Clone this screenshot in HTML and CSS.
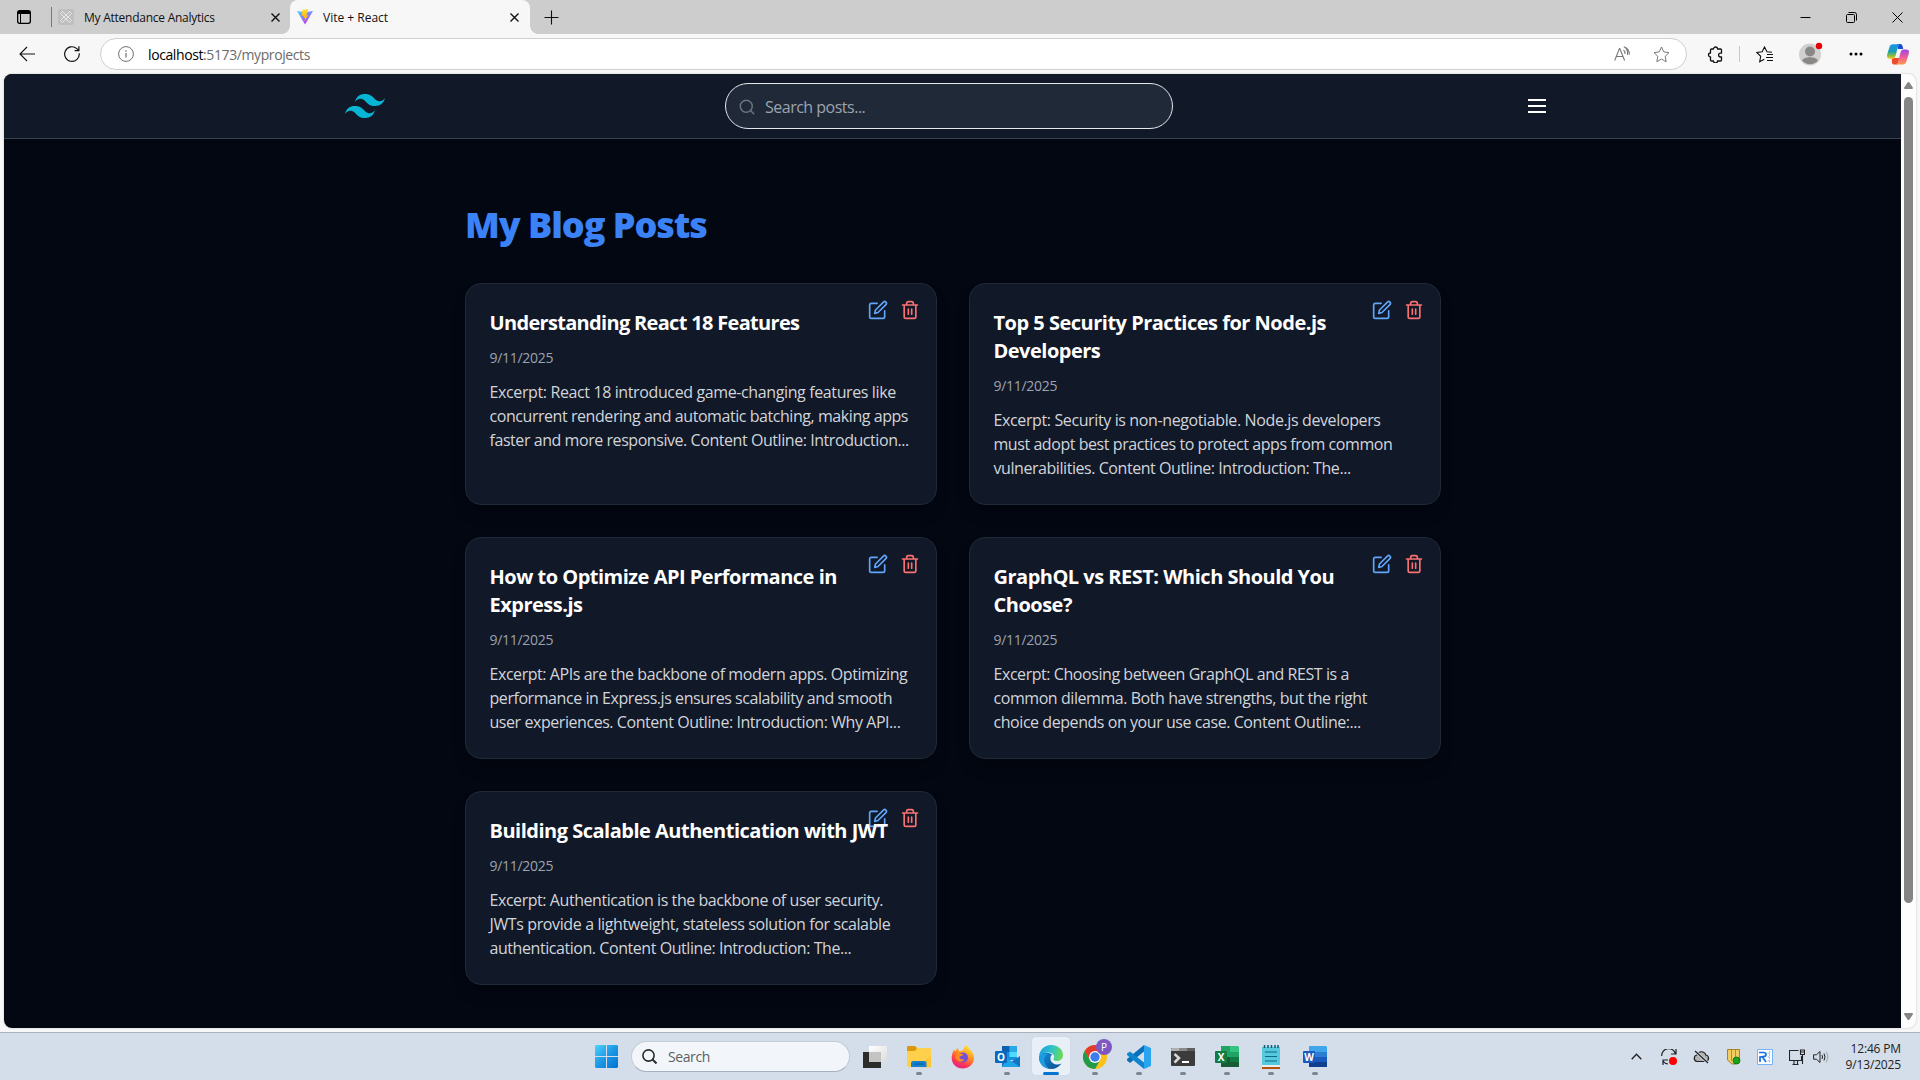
FILE: index.html
```html
<!DOCTYPE html>
<html lang="en">
<head>
<meta charset="utf-8">
<title>Vite + React</title>
<link rel="stylesheet" href="styles.css">
</head>
<body>
<div class="screen">
  <div class="tabstrip">
    <svg class="workspaces" width="14" height="14" viewBox="0 0 14 14"><rect x=".65" y=".65" width="12.700" height="12.700" rx="2" fill="none" stroke="#000" stroke-width="1.300"/><path d="M1 1h12v3H1z"/><path d="M3.500 4v9" stroke="#000"/></svg>
    <span class="tab-divider"></span>
    <div class="tab tab-idle">
      <svg width="16" height="16" viewBox="0 0 16 16"><rect width="16" height="16" rx="2" fill="#bebfc1"/><path d="M2.500 4.500l2-2 9 9-2 2zM11.500 2.500l2 2-9 9-2-2z" fill="none" stroke="#e8e8e8"/></svg>
      <span class="tab-title">My Attendance Analytics</span>
      <svg class="close" width="9" height="9" viewBox="0 0 9 9"><path d="M.5.5l8 8M8.500.5l-8 8" stroke="#111" stroke-width="1.400"/></svg>
    </div>
    <div class="tab tab-active">
      <svg width="16" height="16" viewBox="0 0 15 16" preserveAspectRatio="none"><defs><linearGradient id="vt" x1="0" y1="0" x2=".6" y2="1"><stop offset="0" stop-color="#41d1ff"/><stop offset="1" stop-color="#bd34fe"/></linearGradient><linearGradient id="vy" x1="0" y1="0" x2="0" y2="1"><stop offset="0" stop-color="#ffdd35"/><stop offset="1" stop-color="#ffa800"/></linearGradient></defs><path d="M0 2l7.500 1.300L15 2 7.500 15.500z" fill="url(#vt)"/><path d="M10.500 0L5 1l-.4 6 2-.3-.6 2.500 1.600-.5-.8 3.800 4-6.500-2 .4z" fill="url(#vy)"/></svg>
      <span class="tab-title tab-title-active">Vite + React</span>
      <svg class="close" width="9" height="9" viewBox="0 0 9 9"><path d="M.5.5l8 8M8.500.5l-8 8" stroke="#111" stroke-width="1.400"/></svg>
    </div>
    <svg class="newtab" width="15" height="15" viewBox="0 0 15 15"><path d="M7.500.5v14M.5 7.500h14" stroke="#111" stroke-width="1.100"/></svg>
    <div class="window-controls">
      <svg width="11" height="11" viewBox="0 0 11 11"><path d="M.5 5.500h10" stroke="#000"/></svg>
      <svg width="11" height="11" viewBox="0 0 11 11" fill="none" stroke="#000"><rect x=".5" y="2.500" width="8" height="8" rx="1"/><path d="M2.500.5h6a2 2 0 0 1 2 2v6"/></svg>
      <svg width="11" height="11" viewBox="0 0 11 11"><path d="M.5.5l10 10M10.500.5l-10 10" stroke="#000"/></svg>
    </div>
  </div>

  <div class="toolbar">
    <svg class="back" width="16" height="16" viewBox="0 0 16 16" fill="none" stroke="#111" stroke-width="1.100"><path d="M1 8h15M8 1L1 8l7 7"/></svg>
    <svg class="reload" width="16" height="16" viewBox="0 0 16 16" fill="none" stroke="#111" stroke-width="1.200"><path d="M15.200 7.200A7.300 7.300 0 1 1 12.800 2.600L14.700 4.400M14.900.2v4.400h-4.300"/></svg>
    <div class="address">
      <svg width="16" height="16" viewBox="0 0 16 16" fill="none" stroke="#6f6f6f"><circle cx="8" cy="8" r="7.400"/><path d="M8 7v4.500M8 4.300v1.500" stroke-width="1.200"/></svg>
      <span class="url"><b>localhost</b>:5173/myprojects</span>
      <svg class="read" width="17" height="16" viewBox="0 0 17 16" fill="none" stroke="#777" stroke-width="1.100"><path d="M.7 14.500L5.500 2.500h.3l4.800 12M2.300 10.500H9M9.500 3.800a4 4 0 0 1 1.300 4M11.500 2.200a6.500 6.500 0 0 1 1.800 6.600M9.800.7a8 8 0 0 1 5.500 8"/></svg>
      <svg width="17" height="17" viewBox="0 0 17 17" fill="none" stroke="#777"><path stroke-linejoin="round" d="M8.500 1l2.300 4.900 5.200.7-3.800 3.700 1 5.400-4.700-2.600-4.700 2.600 1-5.400L1 6.600l5.200-.7z"/></svg>
    </div>
    <svg class="ext" width="16" height="17" viewBox="0 0 16 17" fill="none" stroke="#111" stroke-width="1.300"><path stroke-linejoin="round" d="M4.500 3h2a2 2 0 0 1 4 0h3q1 0 1 1v3.200h-1a1.900 1.900 0 0 0 0 3.800h1v3q0 1-1 1h-3a2 2 0 0 1-4 0h-2q-1 0-1-1v-3a2 2 0 0 1 0-4V4q0-1 1-1z"/></svg>
    <span class="tool-divider"></span>
    <svg class="favs" width="17" height="17" viewBox="0 0 17 17" fill="none" stroke="#111" stroke-width="1.100"><path d="M16 6.200l-5-.5L8.500 1 6.200 5.700l-5.500.8 4 3.800-1 5.400 4.600-2.500M11 8.500h6M10 11.500h7M11 14.500h6"/></svg>
    <svg class="profile" width="24" height="24" viewBox="0 0 24 24"><circle cx="11" cy="12.500" r="11" fill="#d2d0ce"/><circle cx="11" cy="9.500" r="5" fill="#8a8886"/><path d="M3.300 19c0-5 15.400-5 15.400 0a11 11 0 0 1-15.400 0z" fill="#8a8886"/><circle cx="20" cy="4" r="3.200" fill="#e60000"/></svg>
    <svg class="more" width="14" height="4" viewBox="0 0 14 4"><circle cx="2" cy="2" r="1.500"/><circle cx="7" cy="2" r="1.500"/><circle cx="12" cy="2" r="1.500"/></svg>
    <svg class="copilot" width="22" height="21" viewBox="0 0 22 21"><defs><linearGradient id="ca" x1="0" y1="0" x2="0" y2="1"><stop offset="0" stop-color="#1997e8"/><stop offset=".5" stop-color="#1a9fb5"/><stop offset=".8" stop-color="#8cbf3c"/><stop offset="1" stop-color="#f5c51c"/></linearGradient><linearGradient id="cb" x1="0" y1="0" x2="0" y2="1"><stop offset="0" stop-color="#a146e0"/><stop offset=".5" stop-color="#ec5a9c"/><stop offset="1" stop-color="#ff9a4b"/></linearGradient></defs><path d="M10 0h3c2 0 2.500 1 3.200 5H11z" fill="#1b4fd0"/><path d="M5.500 20.500h5l2-6.500H5c-.5 3 0 6.500 1.500 6.500z" fill="#ef4a2e"/><path d="M6 .2h7c-2 1-2.500 4-3.500 8s-1.500 6.500-4 6.500H3C0 14.700-.3 13 .3 10L2.500 3C3 1 4 .2 6 .2z" fill="url(#ca)"/><path d="M16 20.500H9c2-1 2.500-4 3.500-8s1.500-7 4-7H19c3 0 3.300 1.500 2.700 4.500l-2.200 7c-.5 2-1.500 3.500-3.500 3.500z" fill="url(#cb)"/></svg>
  </div>

  <div class="viewport">
    <div class="page">
      <header class="nav">
        <svg class="logo" width="40" height="24" viewBox="0 4.800 24 14.400"><path fill="#06b6d4" d="M12.001 4.800c-3.200 0-5.200 1.600-6 4.800 1.200-1.600 2.600-2.200 4.200-1.800.913.228 1.565.89 2.288 1.624C13.666 10.618 15.027 12 18.001 12c3.200 0 5.200-1.600 6-4.800-1.200 1.600-2.600 2.200-4.200 1.800-.913-.228-1.565-.89-2.288-1.624C16.337 6.182 14.976 4.800 12.001 4.800zm-6 7.200c-3.200 0-5.200 1.600-6 4.800 1.200-1.600 2.600-2.200 4.200-1.800.913.228 1.565.89 2.288 1.624 1.177 1.194 2.538 2.576 5.512 2.576 3.200 0 5.200-1.600 6-4.800-1.200 1.600-2.600 2.200-4.200 1.800-.913-.228-1.565-.89-2.288-1.624C10.337 13.382 8.976 12 6.001 12z"/></svg>
        <div class="search">
          <svg width="18" height="18" viewBox="0 0 24 24" fill="none" stroke="#6b7280" stroke-width="2" stroke-linecap="round"><circle cx="11" cy="11" r="8"/><path d="M21 21l-4.350-4.350"/></svg>
          <span>Search posts...</span>
        </div>
        <svg class="menu" width="18" height="14" viewBox="0 0 18 14"><path d="M0 1h18M0 7h18M0 13h18" stroke="#fff" stroke-width="2"/></svg>
      </header>

      <main class="content">
        <h1>My Blog Posts</h1>
        <div class="grid">
          <article class="card">
            <div class="actions"><svg class="edit"><use href="#i-edit"/></svg><svg class="trash"><use href="#i-trash"/></svg></div>
            <h2 class="snug">Understanding React 18 Features</h2>
            <time>9/11/2025</time>
            <p><span class="loose">Excerpt: React 18 introduced game-changing features like</span><br>concurrent rendering and automatic batching, making apps<br>faster and more responsive. Content Outline: Introduction...</p>
          </article>
          <article class="card">
            <div class="actions"><svg class="edit"><use href="#i-edit"/></svg><svg class="trash"><use href="#i-trash"/></svg></div>
            <h2>Top 5 Security Practices for Node.js<br>Developers</h2>
            <time>9/11/2025</time>
            <p><span class="loose">Excerpt: Security is non-negotiable. Node.js developers</span><br>must adopt best practices to protect apps from common<br>vulnerabilities. Content Outline: Introduction: The...</p>
          </article>
          <article class="card">
            <div class="actions"><svg class="edit"><use href="#i-edit"/></svg><svg class="trash"><use href="#i-trash"/></svg></div>
            <h2>How to Optimize API Performance in<br>Express.js</h2>
            <time>9/11/2025</time>
            <p>Excerpt: APIs are the backbone of modern apps. Optimizing<br>performance in Express.js ensures scalability and smooth<br>user experiences. Content Outline: Introduction: Why API...</p>
          </article>
          <article class="card">
            <div class="actions"><svg class="edit"><use href="#i-edit"/></svg><svg class="trash"><use href="#i-trash"/></svg></div>
            <h2>GraphQL vs REST: Which Should You<br>Choose?</h2>
            <time>9/11/2025</time>
            <p>Excerpt: Choosing between GraphQL and REST is a<br>common dilemma. Both have strengths, but the right<br>choice depends on your use case. Content Outline:...</p>
          </article>
          <article class="card">
            <div class="actions"><svg class="edit"><use href="#i-edit"/></svg><svg class="trash"><use href="#i-trash"/></svg></div>
            <h2>Building Scalable Authentication with JWT</h2>
            <time>9/11/2025</time>
            <p>Excerpt: Authentication is the backbone of user security.<br><span class="loose">JWTs provide a lightweight, stateless solution for scalable</span><br>authentication. Content Outline: Introduction: The...</p>
          </article>
        </div>
      </main>
    </div>
    <div class="scrollbar">
      <svg width="9" height="7" viewBox="0 0 9 7"><path d="M3.500.6q1-1 2 0l3.300 5q.4 1.400-.8 1.400H1Q-.2 7 .2 5.600z" fill="#858585"/></svg>
      <div class="thumb"></div>
      <svg width="9" height="7" viewBox="0 0 9 7"><path d="M3.500 6.400q1 1 2 0l3.300-5Q9.200 0 8 0H1Q-.2 0 .2 1.400z" fill="#858585"/></svg>
    </div>
  </div>

  <footer class="taskbar">
    <div class="start">
      <svg width="23" height="23" viewBox="0 0 23 23"><defs><linearGradient id="ws" x1="0" y1="0" x2="1" y2="1"><stop offset="0" stop-color="#4fd2fb"/><stop offset=".5" stop-color="#1b98e6"/><stop offset="1" stop-color="#0073d0"/></linearGradient></defs><path fill="url(#ws)" d="M1 0h10v11H0V1zM12 0h10l1 1v10H12zM0 12h11v11H1l-1-1zM12 12h11v10l-1 1H12z"/></svg>
    </div>
    <div class="task-search">
      <svg width="15" height="15" viewBox="0 0 15 15" fill="none" stroke="#2b2b2b" stroke-width="1.600"><circle cx="6.500" cy="6.500" r="5.600"/><path d="M10.500 10.500l4 4" stroke-width="2"/></svg>
      <span>Search</span>
    </div>
    <div class="apps">
      <div class="app"><svg width="24" height="24" viewBox="0 0 24 24"><defs><linearGradient id="tv" x1="0" y1="0" x2="1" y2="1"><stop offset="0" stop-color="#fff"/><stop offset="1" stop-color="#dcdcdc"/></linearGradient></defs><path d="M0 7h18v16H0z" fill="#2c2c2a"/><path d="M6 1h18v16H6z" fill="url(#tv)"/><path d="M6 7h12v10H6z" fill="#c4c4c4"/></svg></div>
      <div class="app open"><svg width="24" height="24" viewBox="0 0 24 24"><path d="M0 2q0-1 1-1h7l2 2h13q1 0 1 1v18H0z" fill="#ffd04c"/><path d="M0 2q0-1 1-1h7l2 2-2 3H0z" fill="#dc9808"/><path d="M12 22.500L24 10v12.500z" fill="#fdbb1d" opacity=".5"/><path d="M4 22v-4q0-2 2-2h11.500q2 0 2 2v4z" fill="#1480cf"/><path d="M7 19h10" stroke="#075a9c"/></svg></div>
      <div class="app"><svg width="24" height="24" viewBox="0 0 24 24"><defs><linearGradient id="ff" x1=".8" y1="0" x2=".3" y2="1"><stop offset="0" stop-color="#fff23a"/><stop offset=".4" stop-color="#ff9a22"/><stop offset=".75" stop-color="#ff3a50"/><stop offset="1" stop-color="#e0208c"/></linearGradient></defs><path d="M15 0c3 2 3 4 4.500 5C22 7.500 23 10 23 13c0 6-5 10.500-11.300 10.500S.7 19 .7 13c0-3 .5-5 2.300-8.500l1.500 2.200C5 4 6 3.500 7 3c0 2 1 3 2 3.200 2-.6 3.500-1.200 4-2.700.3-1.300.5-2.500 2-3.500z" fill="url(#ff)"/><circle cx="12" cy="12.500" r="5" fill="#7550d8"/><path d="M5 9c3-2 6 0 7.500.5-1 1.500-3 1.800-4 2 0 3 3 3.500 5 2.500-2 4-8 3-9-1z" fill="#ff8a1e"/></svg></div>
      <div class="app open"><svg width="25" height="24" viewBox="0 0 25 24"><path d="M7 1h15v14H7z" fill="#1490df"/><path d="M7 1h7.500v6H7z" fill="#0a5fae"/><path d="M14.500 1H22v6h-7.500z" fill="#28a8ea"/><path d="M14.500 7H22v5h-7.500z" fill="#50d9ff"/><path d="M7 13l9 4 9-6v11H7z" fill="#1573c4"/><path d="M7 22h18L12 13z" fill="#1ea3e6"/><rect y="6" width="12" height="12" rx="1" fill="#0669bd"/><text x="6" y="15.500" class="glyph">O</text></svg></div>
      <div class="app current"><svg width="24" height="24" viewBox="0 0 24 24"><defs><linearGradient id="eg" x1="0" y1=".3" x2="1" y2=".5"><stop offset="0" stop-color="#1a9ee0"/><stop offset=".5" stop-color="#2fc2c8"/><stop offset="1" stop-color="#6bdc54"/></linearGradient><linearGradient id="ed" x1="0" y1="0" x2="1" y2="1"><stop offset="0" stop-color="#1592dc"/><stop offset="1" stop-color="#0c4a8f"/></linearGradient></defs><path d="M0 12c0 7 5 12 12 12 4.500 0 8-2 10.500-5.500-4 2-10 1-11-4-.5-3 1-4.500 2-5C8 6 1 7 0 12z" fill="url(#ed)"/><path d="M0 11.500C.5 5 5.500 0 12 0c7 0 12 4.500 12 10 0 4-3 6-6 6-2.500 0-4-1-3.500-2 2-3-.5-6.500-5-6.500C5 7.500 1 9 0 11.500z" fill="url(#eg)"/><path d="M8 9c-4 3-4 10 2 14.500C4 22.500 0 18 0 12.500 1 9 5 8 8 9z" fill="#1b9de2"/></svg></div>
      <div class="app open"><svg width="24" height="24" viewBox="0 0 24 24"><circle cx="12" cy="12" r="12" fill="#fbc116"/><path d="M1.600 6A12 12 0 0 1 22.400 6H12l-5 9z" fill="#e33b2e"/><path d="M1.600 6A12 12 0 0 0 12 24l5.200-9H7z" fill="#229a48"/><circle cx="12" cy="12" r="6" fill="#fff"/><circle cx="12" cy="12" r="4.700" fill="#3b7ded"/></svg><span class="badge">P</span></div>
      <div class="app open"><svg width="24" height="24" viewBox="0 0 24 24"><path d="M17 0l7 3v18l-7 3z" fill="#2aa4ef"/><path d="M17 0v6.500L3 18l-3-2.500V14z" fill="#0a71b9"/><path d="M17 24v-6.500L3 6.500 0 8.500v1.600z" fill="#0e85cf"/></svg></div>
      <div class="app open"><svg width="24" height="24" viewBox="0 0 24 24"><rect y="3" width="24" height="18" rx="1" fill="#3b3b3b"/><path d="M0 6V4l1-1h7v3z" fill="#b0b0b0"/><path d="M8 3h8v3H8z" fill="#8a8a8a"/><path d="M16 3h7l1 1v2h-8z" fill="#606060"/><path d="M3.500 9l4.500 4-4.500 4.500" stroke="#d8d8d8" stroke-width="2.500" fill="none"/><path d="M11 17h7" stroke="#fff" stroke-width="2"/></svg></div>
      <div class="app open"><svg width="24" height="24" viewBox="0 0 24 24"><path d="M6 1h9v11H6z" fill="#21a366"/><path d="M15 1h8l1 1v5h-9z" fill="#33c481"/><path d="M15 7h9v5h-9z" fill="#21a366"/><path d="M6 12h9v5H6z" fill="#185c37"/><path d="M15 12h9v5h-9z" fill="#107c41"/><path d="M6 17h18v5H6z" fill="#185c37"/><rect y="6" width="12" height="12" rx="1" fill="#107c41"/><text x="6" y="15.500" class="glyph">X</text></svg></div>
      <div class="app open"><svg width="24" height="24" viewBox="0 0 24 24"><path d="M3 22h18v2H3z" fill="#b4530c"/><path d="M3 20h18v2H3z" fill="#eee"/><path d="M3 2h18v18H3z" fill="#57c9df"/><path d="M5.500 0v3M9 0v3M12.500 0v3M16 0v3M19 0v3" stroke="#0b5a76" stroke-width="1.500"/><path d="M6 7h12M6 11.500h12M6 16h12" stroke="#0b6a86" stroke-width="1.200"/></svg></div>
      <div class="app open"><svg width="24" height="24" viewBox="0 0 24 24"><path d="M6 1h17l1 1v5H6z" fill="#41a5ee"/><path d="M6 7h18v5H6z" fill="#2b7cd3"/><path d="M6 12h18v5H6z" fill="#185abd"/><path d="M6 17h18v5H6z" fill="#103f91"/><rect y="6" width="12" height="12" rx="1" fill="#185abd"/><text x="6" y="15.500" class="glyph">W</text></svg></div>
    </div>
    <div class="tray">
      <svg class="t-up" width="11" height="7" viewBox="0 0 11 7"><path d="M.7 6.200l4.800-5 4.800 5" fill="none" stroke="#222" stroke-width="1.300"/></svg>
      <svg class="t-sync" width="17" height="16" viewBox="0 0 17 16" fill="none" stroke="#222" stroke-width="1.200"><path d="M.7 7A7 7 0 0 1 14.500 5M15 0v5h-5M7 15a7 7 0 0 1-5-3M2 16v-5h5"/><circle cx="12" cy="12" r="4" fill="#f00" stroke="none"/></svg>
      <svg class="t-cloud" width="17" height="14" viewBox="0 0 17 14"><path d="M4 11.500a3.300 3.300 0 0 1 0-6.500 4.600 4.600 0 0 1 8.800 0 3.300 3.300 0 0 1 0 6.500z" fill="#b0b0b0" stroke="#222" stroke-width="1.200"/><path d="M2 1l13 12" stroke="#d3deea" stroke-width="3"/><path d="M2 1l13 12" stroke="#222" stroke-width="1.300"/></svg>
      <svg class="t-shield" width="14" height="16" viewBox="0 0 14 16"><path d="M.5.5h12v10L9 15H5L.5 11z" fill="#f1cc62" stroke="#a98122"/><path d="M4.500 1v11M8.500 1v11" stroke="#b78d2c"/><circle cx="9.500" cy="11.500" r="3.500" fill="#1ba51b" stroke="#075c07" stroke-width=".7"/></svg>
      <svg class="t-r" width="16" height="16" viewBox="0 0 16 16"><path d="M.5.5h15v15H.5z" fill="#fff" stroke="#76b4f5"/><path d="M2 3.500h4.500q2.500 0 2.500 2t-2.500 2L3 8v5M5.500 8l3.500 5" fill="none" stroke="#1971df" stroke-width="1.700"/><path d="M12.500 2v12M10.500 4l3 1M10.500 8l3-1M10.500 12l3-1" stroke="#8fc0f6" stroke-dasharray="2 1"/></svg>
      <svg class="t-net" width="16" height="16" viewBox="0 0 16 16" fill="none" stroke="#222" stroke-width="1.100"><path d="M9.500 1.500h-9v10h12V7M3.500 15.500h6M5 11.500v4M8.500 11.500v4M11.500 1h4v4.500h-4zM13.500 5.500v9.500M12 3h3"/></svg>
      <svg class="t-vol" width="16" height="14" viewBox="0 0 16 14" fill="none" stroke="#222"><path d="M.6 4.800h2.800L7 1.500v11L3.400 9.200H.6zM9 5q1 2 0 4M11 3.500q2 3.500 0 7"/><path d="M13 1.500q3.500 5.500 0 11" stroke="#9da4ab"/></svg>
      <div class="clock"><span>12:46 PM</span><span>9/13/2025</span></div>
    </div>
  </footer>
</div>

<svg class="sprite" width="0" height="0">
  <symbol id="i-edit" viewBox="0 0 24 24"><path d="M11 4H4a2 2 0 0 0-2 2v14a2 2 0 0 0 2 2h14a2 2 0 0 0 2-2v-7"/><path d="M18.500 2.500a2.121 2.121 0 0 1 3 3L12 15l-4 1 1-4 9.500-9.500z"/></symbol>
  <symbol id="i-trash" viewBox="0 0 24 24"><path d="M3 6h18M19 6v14a2 2 0 0 1-2 2H7a2 2 0 0 1-2-2V6m3 0V4a2 2 0 0 1 2-2h4a2 2 0 0 1 2 2v2M10 11v6M14 11v6"/></symbol>
</svg>
</body>
</html>
```
FILE: styles.css
```css
* { box-sizing: border-box; }
body { margin: 0; font-family: "Open Sans", "Noto Sans", sans-serif; overflow: hidden; }
svg { display: block; flex: none; }
.sprite { position: absolute; }
.screen { width: 1920px; height: 1080px; display: flex; flex-direction: column; background: #f7f7f7; white-space: nowrap; }

/* tab strip */
.tabstrip { height: 34px; display: flex; align-items: center; background: #cdcdcd; }
.workspaces { margin: 0 20px 0 17px; }
.tab-divider { width: 1px; height: 20px; margin-right: 6px; background: #777; }
.tab { height: 34px; display: flex; align-items: center; }
.tab-idle { width: 232px; padding-right: 10px; }
.tab-active { position: relative; width: 240px; padding: 0 11px 0 7px; background: #f7f7f7; border-radius: 8px 8px 0 0; }
.tab-active::before, .tab-active::after { content: ""; position: absolute; bottom: 0; width: 8px; height: 8px; }
.tab-active::before { left: -8px; background: radial-gradient(circle at 0 0, transparent 7.5px, #f7f7f7 8px); }
.tab-active::after { right: -8px; background: radial-gradient(circle at 100% 0, transparent 7.5px, #f7f7f7 8px); }
.tab-title { font-size: 12px; margin-left: 10px; letter-spacing: -0.25px; color: #111; }
.tab-title-active { letter-spacing: 0; }
.close { margin-left: auto; }
.newtab { margin-left: 14px; }
.window-controls { margin: 0 17px 0 auto; display: flex; gap: 35px; }

/* toolbar */
.toolbar { height: 40px; display: flex; align-items: center; }
.back { margin-left: 19px; }
.reload { margin: 0 20px 0 29px; }
.address { width: 1587px; height: 32px; display: flex; align-items: center; padding: 0 16px 0 17px; background: #fff; border: 1px solid #cfcfcf; border-radius: 16px; }
.url { flex: 1; margin-left: 14px; font-size: 14px; letter-spacing: -0.4px; color: #6b6b6b; }
.url b { font-weight: 400; color: #000; }
.read { margin-right: 22px; }
.ext { margin-left: 20px; }
.tool-divider { width: 1px; height: 16px; margin: 0 16px; background: #c8c8c8; }
.profile { margin-left: 26px; }
.more { margin-left: 26px; }
.copilot { margin-left: 24px; }

/* page */
.viewport { height: 954px; width: 1912px; margin: 0 4px; display: flex; background: #fdfdfd; border-radius: 8px; overflow: hidden; box-shadow: 0 0 2px #bbb; }
.page { width: 1897px; background: #030712; }
.nav { height: 65px; display: flex; align-items: center; background: #111827; border-bottom: 1px solid #374151; }
.logo { margin-left: 341px; }
.search { width: 448px; height: 46px; margin-left: 340px; display: flex; align-items: center; gap: 9px; padding: 1px 14px 0 12px; background: #1f2937; border: 1px solid #e5e7eb; border-radius: 23px; color: #9ca3af; font-size: 16px; letter-spacing: -0.5px; }
.menu { margin-left: 355px; }
.content { width: 976px; margin-left: 461px; padding-top: 66px; }
h1 { margin: 0 0 38px; font-size: 36px; line-height: 40px; font-weight: 800; letter-spacing: -1.05px; color: #3b82f6; }
.grid { display: grid; grid-template-columns: 472px 472px; gap: 32px; }
.card { position: relative; padding: 24px 23.500px; background: #111827; border: 1px solid #1f2937; border-radius: 16px; box-shadow: 0 10px 15px -3px rgba(0,0,0,.3); }
.actions { position: absolute; top: 16px; right: 16px; display: flex; gap: 12px; }
.actions svg { width: 20px; height: 20px; fill: none; stroke-width: 2; stroke-linecap: round; stroke-linejoin: round; }
.edit { stroke: #60a5fa; }
.trash { stroke: #f87171; }
h2 { position: relative; margin: 0; padding: 1px 0 11px; font-size: 20px; line-height: 28px; font-weight: 700; letter-spacing: -0.5px; color: #fff; }
h2.snug { letter-spacing: -0.68px; }
time { display: block; margin-bottom: 12px; font-size: 14px; line-height: 20px; letter-spacing: -0.3px; color: #9ca3af; }
.card p { margin: 0; font-size: 16px; line-height: 24px; letter-spacing: -0.44px; color: #d1d5db; }
.loose { letter-spacing: -0.38px; }
.scrollbar { width: 15px; padding: 8px 0; display: flex; flex-direction: column; align-items: center; }
.thumb { width: 9px; height: 806px; margin: 8px 0 auto; border-radius: 5px; background: #858585; }

/* taskbar */
.taskbar { height: 48px; margin-top: 4px; display: flex; align-items: center; background: #d3deea; border-top: 1px solid #a9b2bc; }
.start { margin-left: 595px; }
.task-search { width: 219px; height: 31px; margin: 0 3px 0 13px; display: flex; align-items: center; gap: 11px; padding-left: 10px; border-radius: 16px; background: #f2f6fa; border: 1px solid #c3ccd6; border-bottom-color: #a8b2be; color: #5c5f63; font-size: 14px; letter-spacing: -0.4px; }
.apps { display: flex; }
.app { position: relative; width: 44px; height: 47px; display: flex; align-items: center; justify-content: center; }
.app svg { position: relative; }
.open::after, .current::after { content: ""; position: absolute; bottom: 5px; width: 6px; height: 3px; border-radius: 2px; background: #7e858c; }
.current::before { content: ""; position: absolute; left: 3px; top: 4px; width: 38px; height: 38px; border-radius: 4px; background: #e9eff6; box-shadow: 0 0 1px #b8c2cc; }
.current::after { width: 16px; background: #0674d1; }
.badge { position: absolute; left: 23px; top: 6px; width: 16px; height: 16px; border-radius: 50%; background: #7e57c2; color: #fff; font-size: 10px; line-height: 16px; text-align: center; }
.glyph { font: 700 10px "Open Sans", sans-serif; fill: #fff; text-anchor: middle; }
.tray { margin: 0 19px 0 auto; display: flex; align-items: center; }
.t-sync { margin-left: 19px; }
.t-cloud { margin-left: 15px; }
.t-shield { margin-left: 17px; }
.t-r { margin-left: 16px; }
.t-net { margin-left: 16px; }
.t-vol { margin-left: 8px; }
.clock { width: 72px; display: flex; flex-direction: column; text-align: right; font-size: 12px; line-height: 16px; letter-spacing: -0.15px; color: #222; }
```
